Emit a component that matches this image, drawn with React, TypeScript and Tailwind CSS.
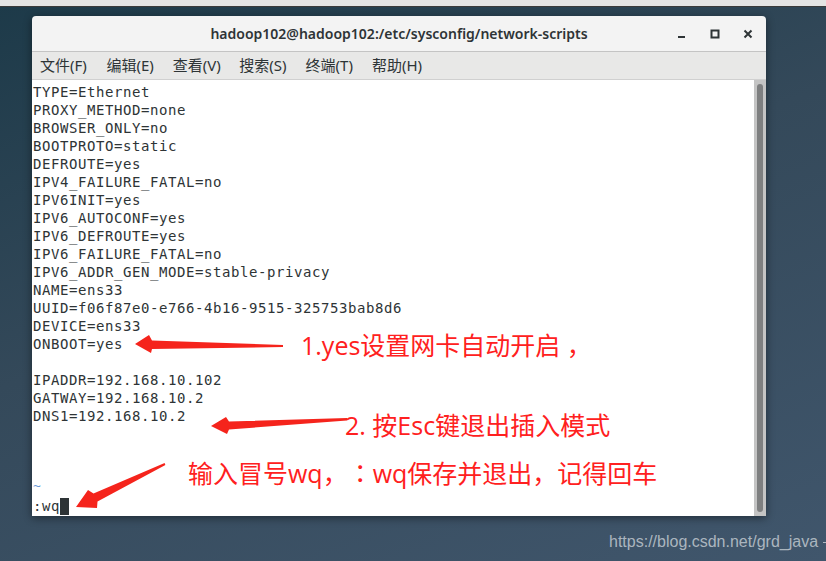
const lines = [
  "TYPE=Ethernet",
  "PROXY_METHOD=none",
  "BROWSER_ONLY=no",
  "BOOTPROTO=static",
  "DEFROUTE=yes",
  "IPV4_FAILURE_FATAL=no",
  "IPV6INIT=yes",
  "IPV6_AUTOCONF=yes",
  "IPV6_DEFROUTE=yes",
  "IPV6_FAILURE_FATAL=no",
  "IPV6_ADDR_GEN_MODE=stable-privacy",
  "NAME=ens33",
  "UUID=f06f87e0-e766-4b16-9515-325753bab8d6",
  "DEVICE=ens33",
  "ONBOOT=yes",
  "",
  "IPADDR=192.168.10.102",
  "GATWAY=192.168.10.2",
  "DNS1=192.168.10.2",
  "",
  "",
  "",
];

const menus = ["文件(F)", "编辑(E)", "查看(V)", "搜索(S)", "终端(T)", "帮助(H)"];

function WindowButtons() {
  return (
    <div className="absolute right-[12px] top-0 flex h-full items-center gap-[21px] text-[#2e3436]">
      <svg width="12" height="12" viewBox="0 0 12 12">
        <rect x="2" y="8" width="7" height="2" fill="currentColor" />
      </svg>
      <svg width="12" height="12" viewBox="0 0 12 12">
        <rect x="2.5" y="2.5" width="7" height="7" fill="none" stroke="currentColor" strokeWidth="2" />
      </svg>
      <svg width="12" height="12" viewBox="0 0 12 12">
        <path d="M2.5 2.5 L9.5 9.5 M9.5 2.5 L2.5 9.5" stroke="currentColor" strokeWidth="2" />
      </svg>
    </div>
  );
}

function Annotations() {
  return (
    <svg className="pointer-events-none absolute left-0 top-0" width="826" height="561">
      <polygon
        fill="#f5241c"
        points="135,344 149,335 152,340.5 283,345 283,347 152,349 151,353"
      />
      <polygon
        fill="#f5241c"
        points="211,426 226,417 229,421.5 347,418 347,420.5 229,429.5 227,434"
      />
      <polygon
        fill="#f5241c"
        points="76,507 88,490 93.5,493.5 164.6,463.1 165.4,464.9 97.5,501.5 97,508"
      />
    </svg>
  );
}

const note =
  "pointer-events-none absolute whitespace-nowrap font-['Open_Sans','Noto_Sans_CJK_SC',sans-serif] text-[25px] leading-[32px] text-[#ff2020] [text-spacing-trim:space-all]";

export default function App() {
  return (
    <div className="relative h-[561px] w-[826px] overflow-hidden bg-[linear-gradient(160deg,#1d3a49_0%,#34495a_45%,#40566c_100%)] font-['Noto_Sans','Noto_Sans_CJK_SC',sans-serif]">
      <div className="h-[7px] border-b border-[#3a3a3a] bg-[#e4e4e4]" />

      <div className="ml-[32px] mt-[9px] flex h-[500px] w-[734px] flex-col overflow-hidden rounded-t-[4px] shadow-[0_2px_8px_rgba(0,0,0,0.45)]">
        <div className="relative flex h-[36px] shrink-0 items-center justify-center border-b border-[#c4c4c4] bg-[#f3f3f3]">
          <span className="text-[14px] font-semibold text-[#2e3436]">
            hadoop102@hadoop102:/etc/sysconfig/network-scripts
          </span>
          <WindowButtons />
        </div>

        <div className="flex h-[28px] shrink-0 items-center gap-[16.4px] border-b border-[#d0d0d0] bg-[#e8e8e7] pl-[8px] text-[15px] text-[#2e3436]">
          {menus.map((m) => (
            <span key={m} className="w-[50px] whitespace-nowrap">
              {m}
            </span>
          ))}
        </div>

        <div className="flex min-h-0 flex-1 bg-white">
          <div className="flex-1 pl-[1px] pt-[3px] font-['DejaVu_Sans_Mono','Liberation_Mono',monospace] text-[14px] leading-[18px] tracking-[0.57px] text-[#2e3436]">
            {lines.map((l, i) => (
              <div key={i} className="h-[18px] whitespace-pre">
                {l}
              </div>
            ))}
            <div className="h-[18px] text-[13px] leading-[14px] text-[#6a9ad8]">~</div>
            <div className="flex h-[18px] items-center whitespace-pre">
              <span>:wq</span>
              <span className="h-[17px] w-[9px] bg-[#2e3436]" />
            </div>
          </div>
          <div className="flex w-[12px] justify-center bg-[#c4c4c4] py-[4px]">
            <div className="w-[6px] rounded-full bg-[#7e7f80]" />
          </div>
        </div>
      </div>

      <Annotations />

      <div className={`${note} left-[301px] top-[329px]`}>1.yes设置网卡自动开启 ，</div>
      <div className={`${note} left-[345px] top-[409px]`}>2. 按Esc键退出插入模式</div>
      <div className={`${note} left-[188px] top-[456px]`}>
        输入冒号wq，<span className="font-['Noto_Sans_CJK_TC',sans-serif]">：</span>wq保存并退出，记得回车
      </div>

      <div className="absolute left-[609px] top-[530px] flex items-center gap-[5px] font-['Liberation_Sans',Arial,sans-serif] text-[16px] text-[#c9d0d6]/80">
        <span>https://blog.csdn.net/grd_java</span>
        <span className="h-[1px] w-[6px] bg-[#c9d0d6]/80" />
      </div>
    </div>
  );
}
